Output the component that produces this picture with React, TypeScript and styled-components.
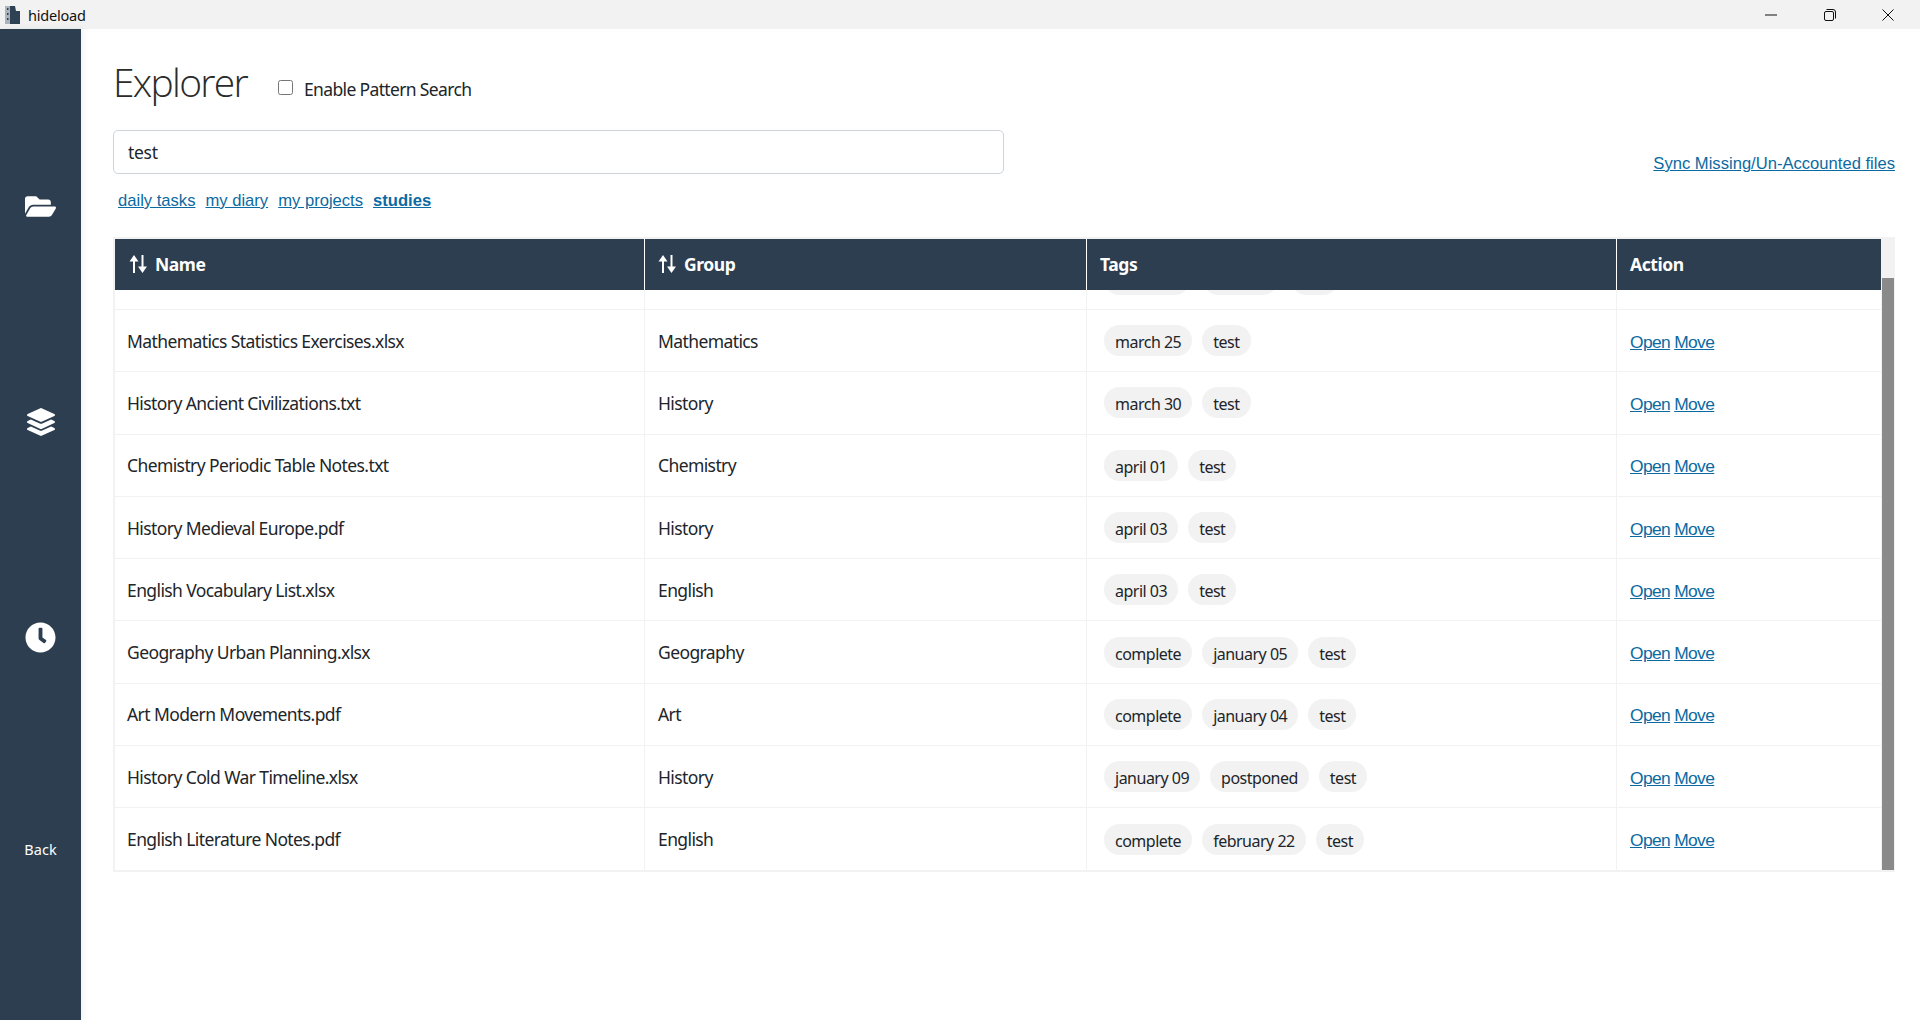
import React, { ReactElement } from 'react';
import styled, { createGlobalStyle } from 'styled-components';
import { FaFolderOpen, FaLayerGroup, FaClock } from 'react-icons/fa';

const GlobalStyle = createGlobalStyle`
  html, body {
    margin: 0;
    height: 100%;
    background: #fff;
    overflow: hidden;
    font-family: "Noto Sans", "Open Sans", sans-serif;
    color: #212529;
  }
`;

const Window = styled.div`
  display: flex;
  flex-direction: column;
  height: 1020px;
  width: 1920px;
`;
const TitleBar = styled.div`
  align-items: center;
  background: #f2f2f2;
  display: flex;
  flex: 0 0 29px;
  height: 29px;
`;
const AppIcon = styled.svg`
  height: 19px;
  margin: 0 8px 0 5px;
  width: 15px;
`;
const AppName = styled.span`
  color: #111;
  font-size: 14.5px;
  letter-spacing: -0.2px;
`;
const WindowButtons = styled.div`
  align-items: center;
  display: flex;
  gap: 46.5px;
  margin-left: auto;
  padding-right: 26px;
`;
const WindowIcon = styled.svg`
  display: block;
  height: 12px;
  width: 12px;
`;
const Main = styled.div`
  display: flex;
  flex: 1;
  min-height: 0;
`;
const Sidebar = styled.nav`
  align-items: center;
  background: #2c3e50;
  box-shadow: 2px 0 6px rgba(44, 62, 80, 0.08);
  color: #fff;
  display: flex;
  flex: 0 0 81px;
  flex-direction: column;
  padding-top: 161px;
`;
const SideItem = styled.div<{ $gap: number }>`
  align-items: center;
  display: flex;
  height: 32px;
  justify-content: center;
  margin-bottom: ${props => props.$gap}px;
`;
const BackLabel = styled.div`
  font-size: 14.5px;
`;
const Content = styled.main`
  flex: 1;
  min-width: 0;
  padding: 0 25px 0 32px;
`;
const Heading = styled.div`
  align-items: center;
  display: flex;
  height: 54px;
  margin-top: 27px;
`;
const Title = styled.h1`
  color: #2b2b2b;
  font-family: "Open Sans", sans-serif;
  font-size: 39px;
  font-weight: 300;
  letter-spacing: -1.7px;
  line-height: 54px;
  margin: -2px 0 0;
`;
const PatternToggle = styled.label`
  align-items: center;
  display: flex;
  font-size: 17.5px;
  letter-spacing: -0.65px;
  margin: 12px 0 0 31px;
`;
const Checkbox = styled.input`
  height: 15px;
  margin: 0 11px 4px 0;
  width: 15px;
`;
const SearchRow = styled.div`
  align-items: flex-end;
  display: flex;
  justify-content: space-between;
  margin-top: 20px;
`;
const SearchInput = styled.input`
  border: 1px solid #ced4da;
  border-radius: 5px;
  box-sizing: border-box;
  color: #212529;
  font-family: "Noto Sans", sans-serif;
  font-size: 17.5px;
  height: 44px;
  letter-spacing: -0.3px;
  outline: none;
  padding: 0 14px 1px;
  width: 891px;
`;
const Link = styled.a<{ $bold?: boolean }>`
  color: #0b6aa2;
  cursor: pointer;
  font-family: "Liberation Sans", Arial, sans-serif;
  font-size: 16.6px;
  font-weight: ${props => (props.$bold ? 700 : 400)};
  text-decoration: underline;
`;
const Bookmarks = styled.div`
  display: flex;
  gap: 10px;
  height: 22px;
  margin-top: 17px;
  padding-left: 5px;
`;
const TableFrame = styled.div`
  border-bottom: 2px solid #f2f2f2;
  border-left: 2px solid #f2f2f2;
  border-top: 2px solid #f2f2f2;
  box-sizing: border-box;
  display: flex;
  height: 635px;
  margin-top: 24px;
  overflow: hidden;
`;
const TableWrap = styled.div`
  flex: 1;
  min-width: 0;
`;
const Grid = styled.div`
  display: grid;
  grid-template-columns: 529px 442px 530px 1fr;
`;
const HeadCell = styled.div`
  align-items: center;
  background: #2c3e50;
  border-left: 1px solid #fff;
  box-sizing: border-box;
  color: #fff;
  display: flex;
  font-size: 17.5px;
  font-weight: 700;
  height: 51px;
  letter-spacing: -0.45px;
  padding: 0 0 1px 13px;
  &:first-child { border-left: 0; padding-left: 14px; }
`;
const SortIcon = styled.svg`
  height: 18px;
  margin-right: 8px;
  width: 18px;
`;
const Cell = styled.div`
  align-items: center;
  border-bottom: 1px solid #f2f2f2;
  border-left: 1px solid #f2f2f2;
  box-sizing: border-box;
  display: flex;
  font-size: 17.5px;
  height: 62.3px;
  letter-spacing: -0.6px;
  padding-left: 13px;
  &:nth-child(4n + 1) { border-left: 0; padding-left: 12px; }
`;
const ClippedCell = styled(Cell)`
  align-items: flex-start;
  height: 20px;
  overflow: hidden;
`;
const Tag = styled.span`
  background: #f2f2f2;
  border-radius: 16px;
  font-size: 16px;
  letter-spacing: -0.5px;
  line-height: 28px;
  margin-right: 10px;
  padding: 3px 11px 0;
  &:first-child { margin-left: 4px; }
`;
const ClippedTag = styled(Tag)<{ $width: number }>`
  height: 31px;
  margin-right: 13px;
  margin-top: -26px;
  padding: 0;
  width: ${props => props.$width}px;
`;
const ActionLink = styled(Link)`
  font-size: 17.4px;
  margin: 3px 4px 0 0;
`;
const ScrollTrack = styled.div`
  background: #f2f2f2;
  box-sizing: border-box;
  flex: 0 0 14px;
  padding: 39px 1px 0;
`;
const ScrollThumb = styled.div`
  background: #8a8a8a;
  height: 100%;
`;

interface Row {
  name: string;
  group: string;
  tags: string[];
}

const rows: Row[] = [
  { name: 'Mathematics Statistics Exercises.xlsx', group: 'Mathematics', tags: ['march 25', 'test'] },
  { name: 'History Ancient Civilizations.txt', group: 'History', tags: ['march 30', 'test'] },
  { name: 'Chemistry Periodic Table Notes.txt', group: 'Chemistry', tags: ['april 01', 'test'] },
  { name: 'History Medieval Europe.pdf', group: 'History', tags: ['april 03', 'test'] },
  { name: 'English Vocabulary List.xlsx', group: 'English', tags: ['april 03', 'test'] },
  { name: 'Geography Urban Planning.xlsx', group: 'Geography', tags: ['complete', 'january 05', 'test'] },
  { name: 'Art Modern Movements.pdf', group: 'Art', tags: ['complete', 'january 04', 'test'] },
  { name: 'History Cold War Timeline.xlsx', group: 'History', tags: ['january 09', 'postponed', 'test'] },
  { name: 'English Literature Notes.pdf', group: 'English', tags: ['complete', 'february 22', 'test'] }
];

function Sort(): ReactElement {
  return (
    <SortIcon viewBox="0 0 18 18" fill="#fff">
      <path d="M4 6h2v12H4z" />
      <path d="M5 0l4.5 6.5h-9z" />
      <path d="M12.5 0h2v12h-2z" />
      <path d="M13.5 18L9 11.5h9z" />
    </SortIcon>
  );
}

export default function App(): ReactElement {
  return (
    <Window>
      <GlobalStyle />
      <TitleBar>
        <AppIcon viewBox="0 0 15 19">
          <path d="M0 1h5v18H0z" fill="#aab4bd" />
          <path d="M5 1h5l1 5h4v13H5z" fill="#2f4254" />
          <path d="M2 3h1.5v2H2zM2 8h1.5v2H2zM2 13h1.5v2H2z" fill="#2f4254" />
        </AppIcon>
        <AppName>hideload</AppName>
        <WindowButtons>
          <WindowIcon viewBox="0 0 12 12" fill="none" stroke="#111" strokeWidth="1">
            <path d="M0 6h12" />
          </WindowIcon>
          <WindowIcon viewBox="0 0 12 12" fill="none" stroke="#111" strokeWidth="1">
            <rect x="0.5" y="2.5" width="9" height="9" rx="1.5" />
            <path d="M2.5 0.5h6.5a2.5 2.5 0 0 1 2.5 2.5v6.5" />
          </WindowIcon>
          <WindowIcon viewBox="0 0 12 12" fill="none" stroke="#111" strokeWidth="1">
            <path d="M0.5 0.5l11 11M11.5 0.5l-11 11" />
          </WindowIcon>
        </WindowButtons>
      </TitleBar>
      <Main>
        <Sidebar>
          <SideItem $gap={184}><FaFolderOpen size={31} /></SideItem>
          <SideItem $gap={183}><FaLayerGroup size={28} /></SideItem>
          <SideItem $gap={186}><FaClock size={31} /></SideItem>
          <BackLabel>Back</BackLabel>
        </Sidebar>
        <Content>
          <Heading>
            <Title>Explorer</Title>
            <PatternToggle>
              <Checkbox type="checkbox" />
              Enable Pattern Search
            </PatternToggle>
          </Heading>
          <SearchRow>
            <SearchInput defaultValue="test" />
            <Link>Sync Missing/Un-Accounted files</Link>
          </SearchRow>
          <Bookmarks>
            <Link>daily tasks</Link>
            <Link>my diary</Link>
            <Link>my projects</Link>
            <Link $bold>studies</Link>
          </Bookmarks>
          <TableFrame>
            <TableWrap>
              <Grid>
                <HeadCell><Sort />Name</HeadCell>
                <HeadCell><Sort />Group</HeadCell>
                <HeadCell>Tags</HeadCell>
                <HeadCell>Action</HeadCell>
                <ClippedCell />
                <ClippedCell />
                <ClippedCell>
                  <ClippedTag $width={86} />
                  <ClippedTag $width={75} />
                  <ClippedTag $width={47} />
                </ClippedCell>
                <ClippedCell />
                {rows.map(row => (
                  <React.Fragment key={row.name}>
                    <Cell>{row.name}</Cell>
                    <Cell>{row.group}</Cell>
                    <Cell>
                      {row.tags.map(tag => <Tag key={tag}>{tag}</Tag>)}
                    </Cell>
                    <Cell>
                      <ActionLink>Open</ActionLink>
                      <ActionLink>Move</ActionLink>
                    </Cell>
                  </React.Fragment>
                ))}
              </Grid>
            </TableWrap>
            <ScrollTrack><ScrollThumb /></ScrollTrack>
          </TableFrame>
        </Content>
      </Main>
    </Window>
  );
}
